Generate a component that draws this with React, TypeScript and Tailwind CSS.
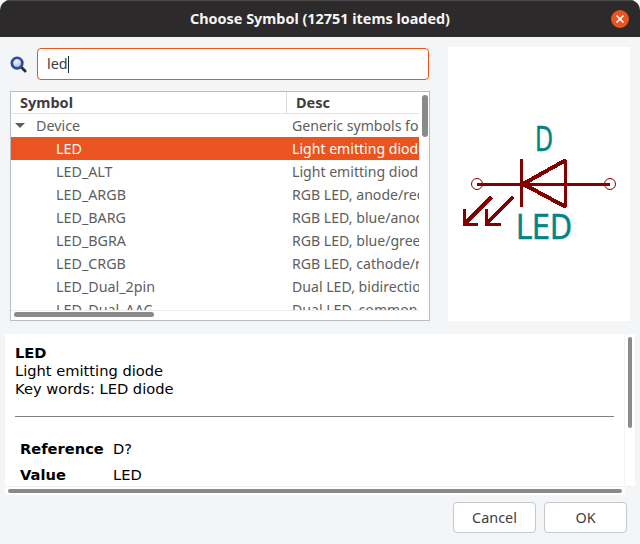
const rows = [
  { name: 'LED', desc: 'Light emitting diode', selected: true },
  { name: 'LED_ALT', desc: 'Light emitting diode' },
  { name: 'LED_ARGB', desc: 'RGB LED, anode/red/green/blue' },
  { name: 'LED_BARG', desc: 'RGB LED, blue/anode/red/green' },
  { name: 'LED_BGRA', desc: 'RGB LED, blue/green/red/anode' },
  { name: 'LED_CRGB', desc: 'RGB LED, cathode/red/green/blue' },
  { name: 'LED_Dual_2pin', desc: 'Dual LED, bidirectional' },
  { name: 'LED_Dual_AAC', desc: 'Dual LED, common cathode' },
];

function SearchIcon() {
  return (
    <svg width="17" height="17" viewBox="0 0 18 18" className="shrink-0">
      <defs>
        <radialGradient id="lens" cx="40%" cy="35%" r="65%">
          <stop offset="0%" stopColor="#eef3fb" />
          <stop offset="65%" stopColor="#c2d0ec" />
          <stop offset="100%" stopColor="#6f8ccf" />
        </radialGradient>
      </defs>
      <path d="M11.5 11.5l4.5 4.5" stroke="#2e2e2e" strokeWidth="3" strokeLinecap="round" />
      <circle cx="7.5" cy="7.5" r="5.6" fill="url(#lens)" stroke="#2b4a9f" strokeWidth="2.8" />
    </svg>
  );
}

function SymbolPreview() {
  return (
    <svg width="182" height="274" viewBox="448 47 182 274">
      <circle cx="477" cy="184" r="5.5" fill="none" stroke="#840000" strokeWidth="1" />
      <circle cx="610" cy="184" r="5.5" fill="none" stroke="#840000" strokeWidth="1" />
      <g stroke="#840000" fill="none" shapeRendering="crispEdges">
        <path d="M477 184H610" strokeWidth="3" />
        <path d="M521.5 159V207" strokeWidth="3" />
        <path d="M565 160V207" strokeWidth="3" />
        <path d="M566 160L523 184L566 207" strokeWidth="4" />
        <path d="M491.5 197L465 223.5" strokeWidth="4" />
        <path d="M513 197L486.5 223.5" strokeWidth="4" />
        <path d="M464.5 209V224H478" strokeWidth="3" />
        <path d="M486 209V224H501" strokeWidth="3" />
      </g>
      <text x="535" y="151" fill="#008484" stroke="#008484" strokeWidth="0.4" fontFamily="'DejaVu Sans', sans-serif" fontSize="33" textLength="18" lengthAdjust="spacingAndGlyphs">D</text>
      <text x="516" y="239" fill="#008484" stroke="#008484" strokeWidth="0.4" fontFamily="'DejaVu Sans', sans-serif" fontSize="33" textLength="56" lengthAdjust="spacingAndGlyphs">LED</text>
    </svg>
  );
}

export default function App() {
  return (
    <div className="w-[640px] h-[544px] bg-[#f4f5f7] overflow-hidden font-['Noto_Sans',sans-serif]">
      <div className="h-full flex flex-col rounded-t-[10px] overflow-hidden bg-[#f4f5f7]">
        <div className="relative h-[37px] shrink-0 flex items-center justify-center bg-[#2c2a2a] border-t border-[#4a4848]">
          <span className="text-[14.4px] font-bold text-[#f5f5f5]">Choose Symbol (12751 items loaded)</span>
          <div className="absolute right-[11px] top-[9px] w-[18px] h-[18px] rounded-full bg-[#e95420] flex items-center justify-center">
            <svg width="10" height="10" viewBox="0 0 10 10">
              <path d="M1.5 1.5l7 7M8.5 1.5l-7 7" stroke="#fff" strokeWidth="1.7" />
            </svg>
          </div>
        </div>

        <div className="flex h-[297px] shrink-0">
          <div className="w-[448px] shrink-0 flex flex-col pl-[10px] pt-[11px]">
            <div className="flex items-center h-[32px] shrink-0">
              <div className="w-[27px] shrink-0 pt-[1px]"><SearchIcon /></div>
              <div className="w-[392px] h-[32px] bg-white border border-[#e95420] rounded-[4px] flex items-center pl-[9px] text-[14.4px] text-[#3d3d3d]">
                led<span className="w-px h-[17px] bg-[#222]" />
              </div>
            </div>
            <div className="relative mt-[11px] w-[420px] h-[230px] bg-white border border-[#b9bdc5] overflow-hidden">
              <div className="flex h-[22px] border-b border-[#e4e4e4] text-[14.5px] font-bold text-[#3d3d3d] leading-[20px]">
                <div className="w-[276px] pl-[9px] border-r border-[#dcdcdc]">Symbol</div>
                <div className="pl-[9px]">Desc</div>
              </div>
              <div className="flex h-[23px] w-[408px] text-[14.3px] text-[#5e5e5e] leading-[23px] whitespace-nowrap overflow-hidden">
                <div className="w-[281px] shrink-0 flex items-center">
                  <span className="ml-[4px] mr-[11px] w-0 h-0 border-x-[5px] border-x-transparent border-t-[5px] border-t-[#5e5e5e]" />
                  Device
                </div>
                <div className="text-[14.1px]">Generic symbols for</div>
              </div>
              {rows.map((row) => (
                <div
                  key={row.name}
                  className={`flex h-[23px] w-[408px] text-[14.3px] leading-[23px] whitespace-nowrap overflow-hidden ${row.selected ? 'bg-[#e95420] text-white' : 'text-[#5e5e5e]'}`}
                >
                  <div className="w-[281px] shrink-0 pl-[45px]">{row.name}</div>
                  <div className="text-[14.1px]">{row.desc}</div>
                </div>
              ))}
              <div className="absolute left-0 right-0 bottom-0 h-[10px] bg-white border-t border-[#ececec]" />
              <div className="absolute left-[3px] bottom-[3px] w-[140px] h-[5px] rounded-full bg-[#8a8a8a]" />
              <div className="absolute right-0 top-0 bottom-0 w-[10px] bg-white" />
              <div className="absolute right-[1px] top-[3px] w-[6px] h-[42px] rounded-full bg-[#8a8a8a]" />
            </div>
          </div>
          <div className="w-[182px] h-[274px] mt-[10px] bg-white">
            <SymbolPreview />
          </div>
        </div>

        <div className="relative ml-[5px] h-[161px] w-[630px] shrink-0 bg-white overflow-hidden pl-[10px] pt-[10px] font-['DejaVu_Sans',sans-serif] text-[14.67px] text-black leading-[18px]">
          <div className="font-bold">LED</div>
          <div>Light emitting diode</div>
          <div>Key words: LED diode</div>
          <div className="mt-[18px] w-[599px] h-px bg-[#808080]" />
          <div className="mt-[19px] flex h-[26px] items-center">
            <div className="w-[98px] pl-[5px] font-bold">Reference</div>
            <div>D?</div>
          </div>
          <div className="flex h-[26px] items-center">
            <div className="w-[98px] pl-[5px] font-bold">Value</div>
            <div>LED</div>
          </div>
          <div className="absolute left-0 right-0 top-[152px] h-px bg-[#f0f0f0]" />
          <div className="absolute right-[10px] top-0 w-px h-[153px] bg-[#f4f4f4]" />
          <div className="absolute left-[3px] top-[155px] w-[614px] h-[4px] rounded-full bg-[#8a8a8a]" />
          <div className="absolute right-[3px] top-[3px] w-[4px] h-[91px] rounded-full bg-[#8a8a8a]" />
          <div className="absolute right-0 top-[153px] w-[10px] h-[8px] bg-[#f4f5f7]" />
        </div>

        <div className="flex justify-end gap-[8px] pr-[13px] pt-[7px]">
          <button className="w-[83px] h-[31px] bg-white border border-[#c4c7cc] rounded-[4px] text-[14.4px] text-[#3d3d3d]">Cancel</button>
          <button className="w-[83px] h-[31px] bg-white border border-[#c4c7cc] rounded-[4px] text-[14.4px] text-[#3d3d3d]">OK</button>
        </div>
      </div>
    </div>
  );
}
